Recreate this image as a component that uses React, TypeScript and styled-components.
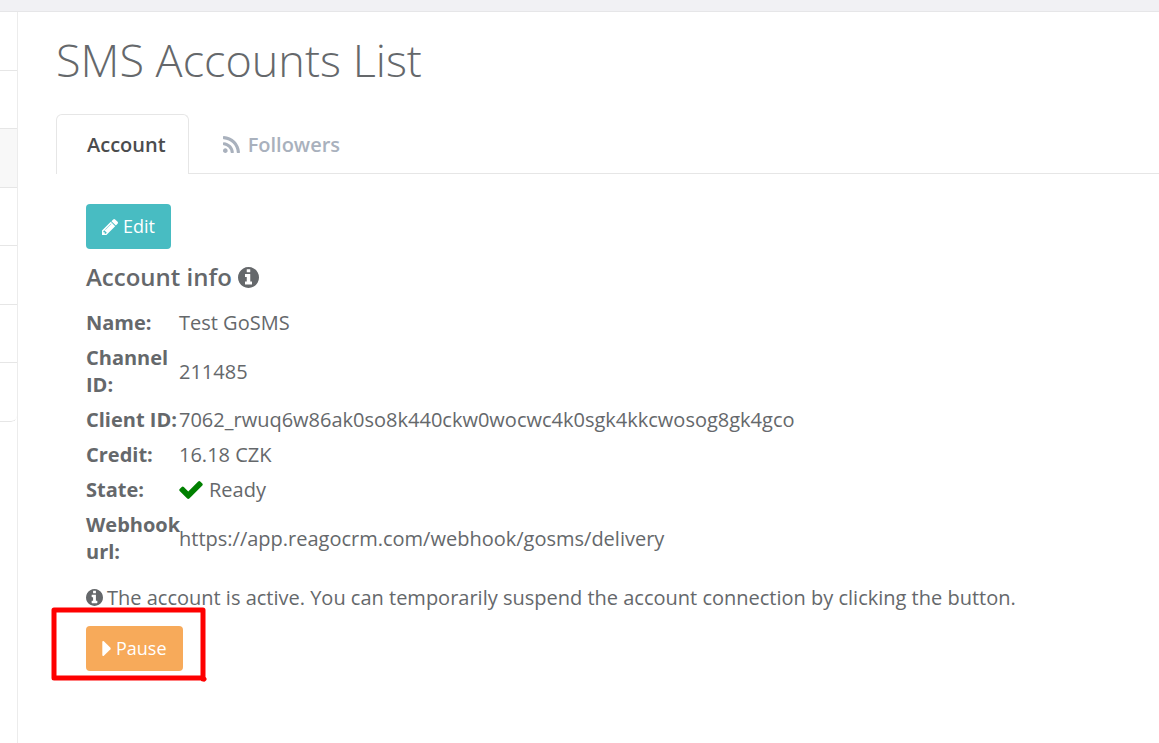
import React from "react";
import styled, { createGlobalStyle } from "styled-components";

const Global = createGlobalStyle`
  *, *::before, *::after { box-sizing: border-box; }
  body {
    margin: 0;
    background: #fff;
    color: #65686b;
    font: 20px/27px "Open Sans", sans-serif;
  }
`;

const Page = styled.div`
  min-height: 100vh;
  display: flex;
  flex-direction: column;
`;

const TopBar = styled.header`
  height: 12px;
  background: #f1f1f4;
  border-bottom: 1px solid #e6e6e8;
`;

const Columns = styled.div`
  flex: 1;
  display: flex;
`;

const Sidebar = styled.aside`
  width: 18px;
  flex: none;
  border-right: 1px solid #ececec;
`;

const SideList = styled.ul`
  list-style: none;
  margin: 0;
  padding: 0;
  height: 410px;
  display: flex;
  flex-direction: column;
  border-bottom-right-radius: 6px;
  overflow: hidden;
`;

const SideItem = styled.li<{ $active?: boolean }>`
  flex: 1;
  border-bottom: 1px solid #e6e6e6;
  background: ${(p) => (p.$active ? "#f8f8f8" : "#fff")};
  &:last-child { border-bottom-right-radius: 6px; }
`;

const Main = styled.main`
  flex: 1;
  min-width: 0;
  padding: 20px 0 60px 38px;
`;

const Title = styled.h1`
  margin: 0 0 26px;
  font-size: 45px;
  line-height: 56px;
  font-weight: 300;
`;

const Tabs = styled.div`
  display: flex;
  height: 60px;
  border-bottom: 1px solid #e6e6e6;
`;

const Tab = styled.button<{ $active?: boolean }>`
  display: flex;
  align-items: center;
  gap: 8px;
  height: 60px;
  padding: 0 ${(p) => (p.$active ? 22 : 33)}px 0 ${(p) => (p.$active ? 30 : 33)}px;
  border: 1px solid ${(p) => (p.$active ? "#e6e6e6" : "transparent")};
  border-bottom: 0;
  border-radius: 6px 6px 0 0;
  background: ${(p) => (p.$active ? "#fff" : "none")};
  color: ${(p) => (p.$active ? "#4b4c4e" : "#a9b1bd")};
  font: 600 20px/27px "Open Sans", sans-serif;
`;

const Panel = styled.section`
  padding: 30px;
`;

const Button = styled.button<{ $tone: string }>`
  display: flex;
  align-items: center;
  gap: 5px;
  height: 45px;
  padding: 0 16px;
  border: 0;
  border-radius: 4px;
  background: ${(p) => p.$tone};
  color: #fff;
  font: 400 18px/27px "Open Sans", sans-serif;
`;

const Heading = styled.h2`
  display: flex;
  align-items: center;
  gap: 6px;
  margin: 12px 0;
  font-size: 24px;
  line-height: 32px;
  font-weight: 600;
`;

const Info = styled.table`
  width: 100%;
  table-layout: fixed;
  border-collapse: collapse;

  th, td { padding: 4px 0; text-align: left; vertical-align: middle; }
  th { width: 93px; font-weight: 700; }
`;

const State = styled.span`
  display: flex;
  align-items: center;
  gap: 6px;
`;

const Note = styled.p`
  display: flex;
  align-items: center;
  gap: 4px;
  margin: 15px 0;
`;

const Marked = styled.div`
  position: relative;
  width: max-content;
`;

const Mark = styled.svg`
  position: absolute;
  left: -35px;
  top: -20px;
  pointer-events: none;
`;

const Glyph = styled.svg`
  flex: none;
  fill: currentColor;
`;

const shapes = {
  rss: {
    box: "0 128 1408 1408",
    d: "M384 1344q0 80-56 136t-136 56-136-56-56-136 56-136 136-56 136 56 56 136zm512 123q2 28-17 48-18 21-47 21h-135q-25 0-43-16.5t-20-41.5q-22-229-184.5-391.5t-391.5-184.5q-25-2-41.5-20t-16.5-43v-135q0-29 21-47 17-17 43-17h5q160 13 306 80.5t259 181.5q114 113 181.5 259t80.5 306zm512 2q2 27-18 47-18 20-46 20h-143q-26 0-44.5-17.5t-19.5-42.5q-12-215-101-408.5t-231.5-336-336-231.5-408.5-102q-25-1-42.5-19.5t-17.5-43.5v-143q0-28 20-46 18-18 44-18h3q262 13 501.5 120t425.5 294q187 186 294 425.5t120 501.5z",
  },
  pencil: {
    box: "0 149 1515 1515",
    d: "M363 1536l91-91-235-235-91 91v107h128v128h107zm523-928q0-22-22-22-10 0-17 7l-542 542q-7 7-7 17 0 22 22 22 10 0 17-7l542-542q7-7 7-17zm-54-192l416 416-832 832h-416v-416zm683 96q0 53-37 90l-166 166-416-416 166-165q36-38 90-38 53 0 91 38l235 234q37 39 37 91z",
  },
  info: {
    box: "0 128 1536 1536",
    d: "M1024 1376v-160q0-14-9-23t-23-9h-96v-512q0-14-9-23t-23-9h-320q-14 0-23 9t-9 23v160q0 14 9 23t23 9h96v320h-96q-14 0-23 9t-9 23v160q0 14 9 23t23 9h448q14 0 23-9t9-23zm-128-896v-160q0-14-9-23t-23-9h-192q-14 0-23 9t-9 23v160q0 14 9 23t23 9h192q14 0 23-9t9-23zm640 416q0 209-103 385.5t-279.5 279.5-385.5 103-385.5-103-279.5-279.5-103-385.5 103-385.5 279.5-279.5 385.5-103 385.5 103 279.5 279.5 103 385.5z",
  },
  check: {
    box: "121 334 1550 1188",
    d: "M1671 566q0 40-28 68l-724 724-136 136q-28 28-68 28t-68-28l-136-136-362-362q-28-28-28-68t28-68l136-136q28-28 68-28t68 28l294 295 656-657q28-28 68-28t68 28l136 136q28 28 28 68z",
  },
  caret: {
    box: "0 384 576 1024",
    d: "M576 896q0 26-19 45l-448 448q-19 19-45 19t-45-19-19-45v-896q0-26 19-45t45-19 45 19l448 448q19 19 19 45z",
  },
};

function Icon({ name, w, h = w, color }: { name: keyof typeof shapes; w: number; h?: number; color?: string }) {
  return (
    <Glyph width={w} height={h} viewBox={shapes[name].box} color={color} aria-hidden="true">
      <path d={shapes[name].d} />
    </Glyph>
  );
}

const rows: [string, React.ReactNode][] = [
  ["Name:", "Test GoSMS"],
  ["Channel ID:", "211485"],
  ["Client ID:", "7062_rwuq6w86ak0so8k440ckw0wocwc4k0sgk4kkcwosog8gk4gco"],
  ["Credit:", "16.18 CZK"],
  ["State:", <State><Icon name="check" w={24} h={18} color="#008000" />Ready</State>],
  ["Webhook url:", "https://app.reagocrm.com/webhook/gosms/delivery"],
];

export default function App() {
  return (
    <Page>
      <Global />
      <TopBar />
      <Columns>
        <Sidebar>
          <SideList>
            {[0, 1, 2, 3, 4, 5, 6].map((i) => (
              <SideItem key={i} $active={i === 2} />
            ))}
          </SideList>
        </Sidebar>
        <Main>
          <Title>SMS Accounts List</Title>
          <Tabs role="tablist">
            <Tab role="tab" aria-selected="true" $active>Account</Tab>
            <Tab role="tab" aria-selected="false"><Icon name="rss" w={17} />Followers</Tab>
          </Tabs>
          <Panel>
            <Button type="button" $tone="#48bcc2"><Icon name="pencil" w={16} />Edit</Button>
            <Heading>Account info<Icon name="info" w={21} /></Heading>
            <Info>
              <tbody>
                {rows.map(([label, value]) => (
                  <tr key={label}>
                    <th scope="row">{label}</th>
                    <td>{value}</td>
                  </tr>
                ))}
              </tbody>
            </Info>
            <Note>
              <Icon name="info" w={17} />
              The account is active. You can temporarily suspend the account connection by clicking the button.
            </Note>
            <Marked>
              <Button type="button" $tone="#f7aa5a"><Icon name="caret" w={9} h={15} />Pause</Button>
              <Mark width="156" height="78" fill="none" stroke="#fe0000" strokeWidth="5" strokeLinejoin="round" strokeLinecap="round" aria-hidden="true">
                <path d="M152 73V4H3V72H152L153 73" />
              </Mark>
            </Marked>
          </Panel>
        </Main>
      </Columns>
    </Page>
  );
}
